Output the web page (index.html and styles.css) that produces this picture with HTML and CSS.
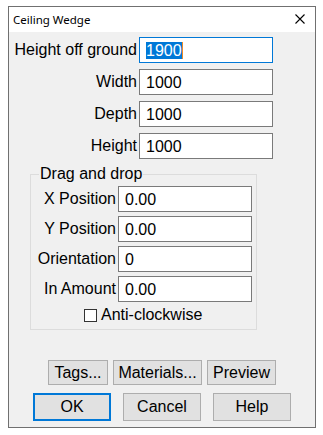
FILE: index.html
```
<!DOCTYPE html>
<html>
<head>
<meta charset="utf-8">
<link rel="stylesheet" href="styles.css">
</head>
<body>
<div class="window">
  <div class="titlebar">
    <span class="title">Ceiling Wedge</span>
    <svg class="close" width="10" height="10" viewBox="0 0 10 10"><path d="M0.5 0.5 L9.5 9.5 M9.5 0.5 L0.5 9.5" stroke="#000" stroke-width="1.1" fill="none"/></svg>
  </div>
  <div class="content">
    <div class="form main-form">
      <span class="label">Height off ground</span>
      <div class="field focused"><span class="sel">1900</span><span class="caret"></span></div>
      <span class="label">Width</span>
      <div class="field">1000</div>
      <span class="label">Depth</span>
      <div class="field">1000</div>
      <span class="label">Height</span>
      <div class="field">1000</div>
    </div>
    <fieldset class="group">
      <legend>Drag and drop</legend>
      <div class="form group-form">
        <span class="label">X Position</span>
        <div class="field">0.00</div>
        <span class="label">Y Position</span>
        <div class="field">0.00</div>
        <span class="label">Orientation</span>
        <div class="field">0</div>
        <span class="label">In Amount</span>
        <div class="field">0.00</div>
      </div>
      <div class="check-row"><span class="checkbox"></span><span class="check-label">Anti-clockwise</span></div>
    </fieldset>
    <div class="btn-row row1">
      <div class="btn w-tags">Tags...</div>
      <div class="btn w-mat">Materials...</div>
      <div class="btn w-prev">Preview</div>
    </div>
    <div class="btn-row row2">
      <div class="btn big default">OK</div>
      <div class="btn big">Cancel</div>
      <div class="btn big">Help</div>
    </div>
  </div>
</div>
</body>
</html>
```
FILE: styles.css
```
html, body {
  margin: 0;
  padding: 0;
  background: #ffffff;
}
body {
  font-family: "Liberation Sans", Arial, sans-serif;
  font-size: 16px;
  color: #000;
}
.window {
  margin: 6px 0 0 8px;
  width: 306px;
  height: 420px;
  border: 1px solid #707070;
  display: flex;
  flex-direction: column;
  background: #f0f0f0;
}
.titlebar {
  height: 25px;
  background: #ffffff;
  display: flex;
  align-items: center;
  justify-content: space-between;
  padding: 0 10px 0 4px;
}
.title {
  font-family: "Noto Sans", "DejaVu Sans", sans-serif;
  font-size: 11.5px;
  color: #000;
  margin-top: -1px;
}
.close {
  display: block;
  margin-top: -1px;
}
.content {
  flex: 1;
  padding-top: 5px;
  display: flex;
  flex-direction: column;
}
.form {
  display: grid;
  column-gap: 2px;
  align-items: center;
}
.main-form {
  grid-template-columns: 128px 134px;
  grid-auto-rows: 26px;
  row-gap: 6px;
}
.group-form {
  grid-template-columns: 85px 134px;
  grid-auto-rows: 26px;
  row-gap: 4px;
}
.label {
  text-align: right;
  white-space: nowrap;
  line-height: 18px;
}
.field {
  box-sizing: border-box;
  height: 26px;
  border: 1px solid #7a7a7a;
  background: #fff;
  padding: 0 0 0 6px;
  line-height: 23px;
  display: flex;
  align-items: center;
}
.field.focused {
  border-color: #0078d7;
}
.sel {
  background: #0078d7;
  color: #fff;
  line-height: 17px;
  padding: 0 0 0 0;
}
.caret {
  width: 1px;
  height: 17px;
  background: #f08a24;
}
.group {
  margin: 6px 0 0 21px;
  width: 227px;
  box-sizing: border-box;
  border: 1px solid #dcdcdc;
  padding: 3px 0 0 0;
  height: 165px;
}
.group legend {
  margin-left: 8px;
  padding: 0 1px;
  line-height: 18px;
}
.check-row {
  display: flex;
  align-items: center;
  margin: 4px 0 0 53px;
  gap: 4px;
  height: 18px;
}
.checkbox {
  box-sizing: border-box;
  width: 13px;
  height: 13px;
  border: 1px solid #333;
  background: #fff;
}
.btn-row {
  display: flex;
  justify-content: center;
}
.row1 {
  margin-top: 30px;
  gap: 5px;
}
.row2 {
  margin-top: 8px;
  gap: 12px;
}
.btn {
  box-sizing: border-box;
  height: 25px;
  border: 1px solid #adadad;
  background: #e1e1e1;
  display: flex;
  align-items: center;
  justify-content: center;
}
.w-tags { width: 60px; }
.w-mat { width: 89px; }
.w-prev { width: 69px; }
.btn.big {
  width: 78px;
  height: 28px;
}
.btn.default {
  border: 2px solid #0078d7;
}
```
